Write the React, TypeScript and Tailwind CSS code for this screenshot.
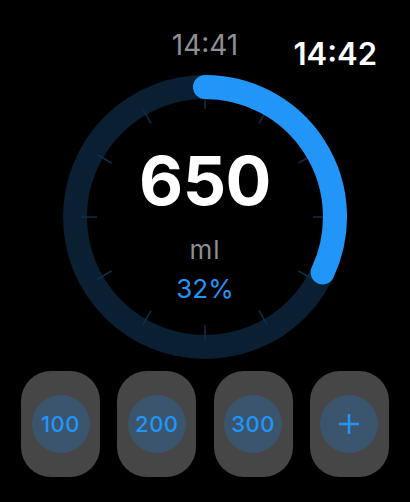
import { Fragment } from "react";

const RING = 284;
const C = RING / 2;
const R = 130;
const progress = 0.32;

// point on the ring, angle in degrees clockwise from 12 o'clock
function polar(r: number, deg: number) {
    const a = (deg * Math.PI) / 180;
    return { x: C + r * Math.sin(a), y: C - r * Math.cos(a) };
}

function Ring() {
    const end = polar(R, progress * 360);
    const start = polar(R, 0);
    const large = progress > 0.5 ? 1 : 0;
    return (
        <svg width={RING} height={RING} viewBox={`0 0 ${RING} ${RING}`} className="absolute inset-0">
            <circle cx={C} cy={C} r={R} fill="none" stroke="#0a1f32" strokeWidth={24} />
            {Array.from({ length: 12 }).map((_, i) => {
                const a = polar(108, i * 30);
                const b = polar(124, i * 30);
                return <line key={i} x1={a.x} y1={a.y} x2={b.x} y2={b.y} stroke="#0e2f4a" strokeWidth={1.5} />;
            })}
            <path
                d={`M ${start.x} ${start.y} A ${R} ${R} 0 ${large} 1 ${end.x} ${end.y}`}
                fill="none"
                stroke="#2196f8"
                strokeWidth={24}
                strokeLinecap="round"
            />
        </svg>
    );
}

function QuickButton({ label }: { label?: string }) {
    return (
        <button className="w-[79px] h-[106px] rounded-[30px] bg-[#464646] flex items-center justify-center">
            <div className="w-[58px] h-[58px] rounded-full bg-[#3b556e] flex items-center justify-center">
                {label ? (
                    <span className="text-[22px] leading-none font-medium text-[#2196f8] tracking-[0.5px]">{label}</span>
                ) : (
                    <svg width="20" height="20" viewBox="0 0 20 20">
                        <line x1="10" y1="0.5" x2="10" y2="19.5" stroke="#2196f8" strokeWidth="2.5" strokeLinecap="round" />
                        <line x1="0.5" y1="10" x2="19.5" y2="10" stroke="#2196f8" strokeWidth="2.5" strokeLinecap="round" />
                    </svg>
                )}
            </div>
        </button>
    );
}

export default function App() {
    return (
        <div className="w-[410px] h-[502px] bg-black overflow-hidden font-['Inter',sans-serif] flex flex-col">
            {/* clock row */}
            <div className="h-[75px] flex items-start">
                <div className="flex-1" />
                <span className="mt-[31px] text-[28px] leading-none text-[#8e8e93]">14:41</span>
                <div className="flex-1 flex justify-end">
                    <span className="mt-[38px] mr-[33px] text-[31px] leading-none font-semibold text-white">14:42</span>
                </div>
            </div>

            {/* progress ring */}
            <div className="relative w-[284px] h-[284px] ml-[63px]">
                <Ring />
                <div className="relative flex flex-col items-center pt-[71px]">
                    <span className="text-[68px] leading-none font-bold text-white tracking-[-0.5px]">650</span>
                    <span className="mt-[23px] text-[26px] leading-none text-[#8e8e93] tracking-[1px]">ml</span>
                    <span className="mt-[13px] text-[26px] leading-none text-[#2196f8]">32%</span>
                </div>
            </div>

            {/* quick add */}
            <div className="mt-[12px] px-[21px] flex justify-between">
                {["100", "200", "300"].map((v) => (
                    <Fragment key={v}>
                        <QuickButton label={v} />
                    </Fragment>
                ))}
                <QuickButton />
            </div>
        </div>
    );
}
